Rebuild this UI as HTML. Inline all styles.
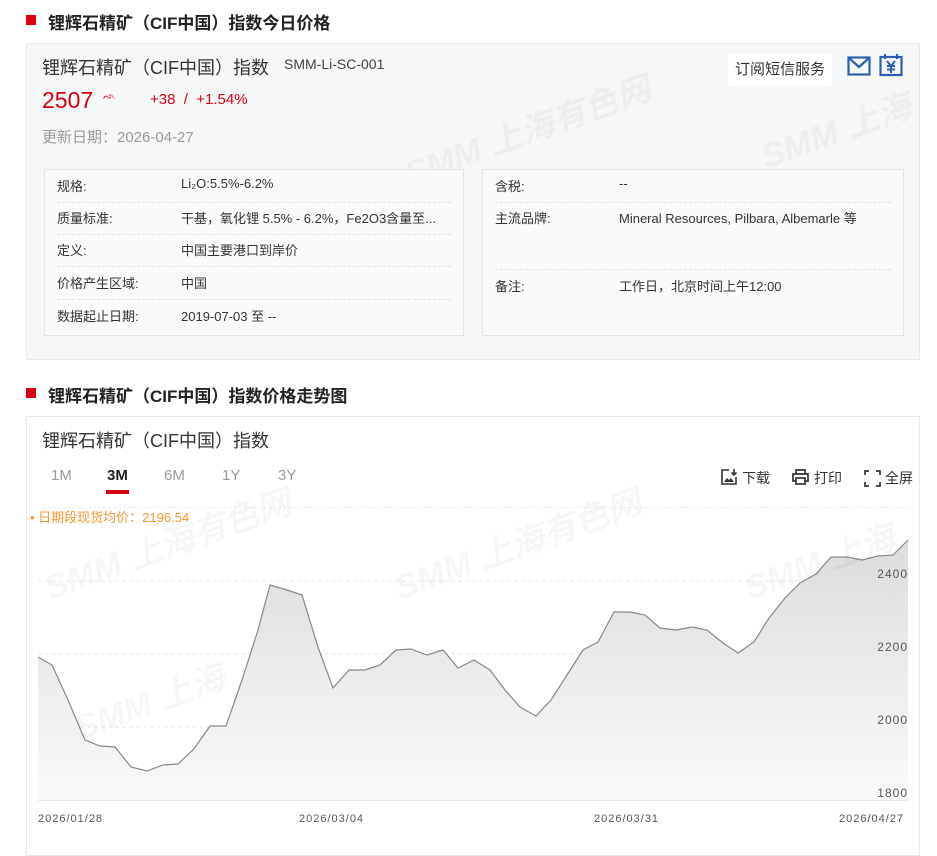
<!DOCTYPE html>
<html><head><meta charset="utf-8"><style>
*{margin:0;padding:0;box-sizing:border-box}
body{width:937px;height:843px;background:#fff;font-family:"Liberation Sans","Noto Sans CJK SC",sans-serif;color:#333;position:relative;overflow:hidden}
.abs{position:absolute}
.h{font-size:17px;font-weight:bold;color:#222}
.sq{width:10px;height:10px;background:#d9000f}
.card{left:26px;top:43px;width:894px;height:317px;background:#f6f7f9;border:1px solid #e6e8ec}
.tbl{background:#f9fafb;border:1px solid #e3e5e8}
.row{position:absolute;left:12px;right:12px;border-bottom:1px dashed #e2e2e2;font-size:13px;color:#333}
.row span{position:absolute;top:0}
.wm{position:absolute;font-size:34px;font-weight:bold;color:rgba(0,0,0,0.035);transform:rotate(-20deg);white-space:nowrap;font-style:italic}
</style></head><body>
<div class="abs sq" style="left:26px;top:15px"></div>
<div class="abs h" style="left:48px;top:9px">锂辉石精矿（CIF中国）指数今日价格</div>

<div class="abs card">
 <div class="wm" style="left:370px;top:60px">SMM 上海有色网</div>
 <div class="wm" style="left:730px;top:60px">SMM 上海</div>
 <div class="abs" style="left:15px;top:10px;font-size:18px;color:#333">锂辉石精矿（CIF中国）指数</div>
 <div class="abs" style="left:257px;top:12px;font-size:14px;color:#444">SMM-Li-SC-001</div>
 <div class="abs" style="left:15px;top:43px;font-size:23px;color:#d9000f">2507</div>
 <div class="abs" style="left:76px;top:47px;font-size:10px;color:#d9000f">ᨒ</div>
 <div class="abs" style="left:123px;top:47px;font-size:15px;color:#d9000f">+38 &nbsp;/ &nbsp;+1.54%</div>
 <div class="abs" style="left:15px;top:82px;font-size:15px;color:#999">更新日期：2026-04-27</div>
 <div class="abs" style="left:701px;top:9px;width:104px;height:33px;background:#fff;border-radius:4px;font-size:15px;line-height:33px;text-align:center;color:#333">订阅短信服务</div>
 <svg class="abs" style="left:820px;top:12px" width="24" height="20" viewBox="0 0 24 20"><rect x="1.5" y="1.5" width="21" height="17" fill="none" stroke="#2d5fb0" stroke-width="2.2"/><path d="M2 2l10 9 10-9" fill="none" stroke="#2d5fb0" stroke-width="2.2"/></svg>
 <svg class="abs" style="left:852px;top:9px" width="24" height="24" viewBox="0 0 24 24"><rect x="1.5" y="4" width="21" height="18" fill="none" stroke="#2d5fb0" stroke-width="2.2"/><path d="M6 1v5M18 1v5M8 8l4 5 4-5M12 13v7M8 13h8M8 16.5h8" fill="none" stroke="#2d5fb0" stroke-width="2"/></svg>

 <div class="abs tbl" style="left:17px;top:125px;width:420px;height:167px">
  <div class="row" style="top:0;height:33px"><span style="top:6px;left:0">规格:</span><span style="top:6px;left:124px">Li₂O:5.5%-6.2%</span></div>
  <div class="row" style="top:33px;height:32px"><span style="top:5px;left:0">质量标准:</span><span style="top:5px;left:124px">干基，氧化锂 5.5% - 6.2%，Fe2O3含量至...</span></div>
  <div class="row" style="top:65px;height:32px"><span style="top:5px;left:0">定义:</span><span style="top:5px;left:124px">中国主要港口到岸价</span></div>
  <div class="row" style="top:97px;height:33px"><span style="top:6px;left:0">价格产生区域:</span><span style="top:6px;left:124px">中国</span></div>
  <div class="row" style="top:130px;height:36px;border:none"><span style="top:6px;left:0">数据起止日期:</span><span style="top:6px;left:124px">2019-07-03 至 --</span></div>
 </div>
 <div class="abs tbl" style="left:455px;top:125px;width:422px;height:167px">
  <div class="row" style="top:0;height:33px"><span style="top:6px;left:0">含税:</span><span style="top:6px;left:124px">--</span></div>
  <div class="row" style="top:33px;height:67px"><span style="top:5px;left:0">主流品牌:</span><span style="top:5px;left:124px">Mineral Resources, Pilbara, Albemarle 等</span></div>
  <div class="row" style="top:100px;height:66px;border:none"><span style="top:6px;left:0">备注:</span><span style="top:6px;left:124px">工作日，北京时间上午12:00</span></div>
 </div>
</div>

<div class="abs sq" style="left:26px;top:388px"></div>
<div class="abs h" style="left:48px;top:382px">锂辉石精矿（CIF中国）指数价格走势图</div>

<div class="abs" style="left:26px;top:416px;width:894px;height:440px;border:1px solid #e8e8e8;background:#fff"></div>
<div class="abs" style="left:42px;top:427px;font-size:18px;color:#333">锂辉石精矿（CIF中国）指数</div>
<div class="abs" style="left:51px;top:467px;font-size:15px;color:#999">1M</div>
<div class="abs" style="left:107px;top:467px;font-size:15px;color:#222;font-weight:bold">3M</div>
<div class="abs" style="left:106px;top:490px;width:23px;height:4px;background:#d9000f"></div>
<div class="abs" style="left:164px;top:467px;font-size:15px;color:#999">6M</div>
<div class="abs" style="left:222px;top:467px;font-size:15px;color:#999">1Y</div>
<div class="abs" style="left:278px;top:467px;font-size:15px;color:#999">3Y</div>
<svg class="abs" style="left:720px;top:468px" width="18" height="18" viewBox="0 0 18 18"><path d="M9 2H2v14h14V9" fill="none" stroke="#333" stroke-width="1.6"/><path d="M14 1v6M11.5 4.5L14 7l2.5-2.5" fill="none" stroke="#333" stroke-width="1.6"/><path d="M4 14l3-4 2 2 2-2 3 4z" fill="#333"/></svg>
<div class="abs" style="left:742px;top:468px;font-size:14px;color:#333">下载</div>
<svg class="abs" style="left:791px;top:468px" width="19" height="18" viewBox="0 0 19 18"><path d="M5 6V2h9v4M5 13H2V6h15v7h-3" fill="none" stroke="#333" stroke-width="1.7"/><rect x="5" y="10" width="9" height="6" fill="none" stroke="#333" stroke-width="1.7"/></svg>
<div class="abs" style="left:814px;top:468px;font-size:14px;color:#333">打印</div>
<svg class="abs" style="left:864px;top:470px" width="17" height="17" viewBox="0 0 17 17"><path d="M1 5V1h4M12 1h4v4M16 12v4h-4M5 16H1v-4" fill="none" stroke="#333" stroke-width="1.7"/></svg>
<div class="abs" style="left:885px;top:468px;font-size:14px;color:#333">全屏</div>

<div class="abs" style="left:38px;top:507px;width:870px;border-top:1px dashed #eee"></div>
<div class="abs" style="left:30px;top:507px;font-size:13px;color:#f7962f">• 日期段现货均价：2196.54</div>

<svg class="abs" style="left:0;top:0" width="937" height="843">
<defs><linearGradient id="g" x1="0" y1="0" x2="0" y2="1"><stop offset="0" stop-color="#dcdcdc"/><stop offset="1" stop-color="#fafafa"/></linearGradient></defs>
<g stroke="#e6e6e6" stroke-dasharray="4 3"><line x1="38" y1="581" x2="908" y2="581"/><line x1="38" y1="654" x2="908" y2="654"/><line x1="38" y1="727" x2="908" y2="727"/></g>
<path d="M38,657 L52,665 68,700 85,740 100,746 115,747 131,767 147,771 163,765 178,764 194,749 210,726 226,726 242,680 258,630 270,585 287,590 302,595 318,647 333,688 349,670 365,670 380,665 396,650 411,649 427,655 443,650 458,668 474,660 490,670 505,690 520,707 536,716 551,700 567,675 583,650 598,642 614,612 630,612 645,615 660,628 676,630 692,627 707,630 723,643 738,653 754,642 769,618 785,598 800,583 816,574 831,557 847,557 862,560 878,556 893,555 908,540 L908,800 L38,800Z" fill="url(#g)"/>
<path d="M38,657 L52,665 68,700 85,740 100,746 115,747 131,767 147,771 163,765 178,764 194,749 210,726 226,726 242,680 258,630 270,585 287,590 302,595 318,647 333,688 349,670 365,670 380,665 396,650 411,649 427,655 443,650 458,668 474,660 490,670 505,690 520,707 536,716 551,700 567,675 583,650 598,642 614,612 630,612 645,615 660,628 676,630 692,627 707,630 723,643 738,653 754,642 769,618 785,598 800,583 816,574 831,557 847,557 862,560 878,556 893,555 908,540" fill="none" stroke="#888" stroke-width="1.2"/>
<line x1="38" y1="800.5" x2="908" y2="800.5" stroke="#e8e8e8"/>
<g font-family="Liberation Sans,sans-serif" font-size="12" fill="#555" text-anchor="end" letter-spacing="1"><text x="908" y="578">2400</text><text x="908" y="651">2200</text><text x="908" y="724">2000</text><text x="908" y="797">1800</text></g>
<g font-family="Liberation Sans,sans-serif" font-size="11" fill="#555" letter-spacing="1"><text x="38" y="822">2026/01/28</text><text x="299" y="822">2026/03/04</text><text x="594" y="822">2026/03/31</text><text x="839" y="822">2026/04/27</text></g>
<g font-family="Liberation Sans,sans-serif" font-size="34" font-weight="bold" font-style="italic" fill="rgba(0,0,0,0.035)"><text x="50" y="600" transform="rotate(-20 50 600)">SMM 上海有色网</text><text x="400" y="600" transform="rotate(-20 400 600)">SMM 上海有色网</text><text x="750" y="600" transform="rotate(-20 750 600)">SMM 上海</text><text x="80" y="740" transform="rotate(-20 80 740)">SMM 上海</text></g>
</svg>
</body></html>
